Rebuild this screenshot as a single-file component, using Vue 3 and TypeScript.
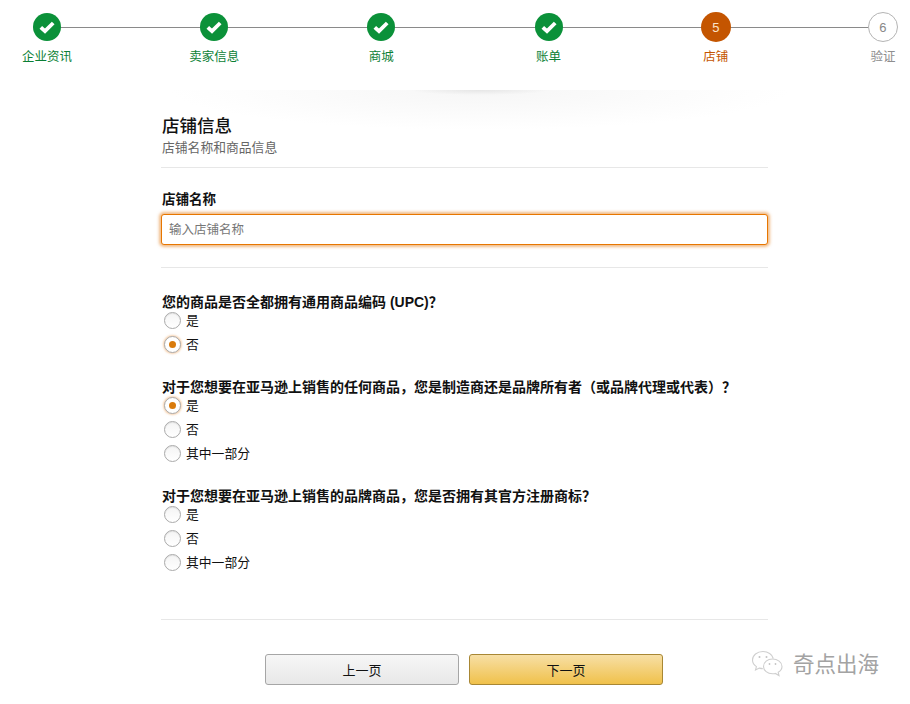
<script setup lang="ts">
interface Step { label: string; state: 'done' | 'current' | 'todo'; n: number }
const steps: Step[] = [
  { label: '企业资讯', state: 'done', n: 1 },
  { label: '卖家信息', state: 'done', n: 2 },
  { label: '商城', state: 'done', n: 3 },
  { label: '账单', state: 'done', n: 4 },
  { label: '店铺', state: 'current', n: 5 },
  { label: '验证', state: 'todo', n: 6 },
]
interface Question { title: string; options: string[]; checked: number; cls: string }
const questions: Question[] = [
  { title: '您的商品是否全都拥有通用商品编码 (UPC)？', options: ['是', '否'], checked: 1, cls: 'q1' },
  { title: '对于您想要在亚马逊上销售的任何商品，您是制造商还是品牌所有者（或品牌代理或代表）？', options: ['是', '否', '其中一部分'], checked: 0, cls: 'q2' },
  { title: '对于您想要在亚马逊上销售的品牌商品，您是否拥有其官方注册商标？', options: ['是', '否', '其中一部分'], checked: -1, cls: 'q3' },
]
</script>

<template>
  <div class="page">
    <div class="stepper">
      <div class="line"></div>
      <div v-for="s in steps" :key="s.n" class="step" :class="s.state">
        <div class="dot">
          <svg v-if="s.state === 'done'" width="18" height="18" viewBox="0 0 18 18">
            <path d="M2.800 9.300 L7 13.200 L15.200 5" fill="none" stroke="#fff" stroke-width="3.800" />
          </svg>
          <span v-else>{{ s.n }}</span>
        </div>
        <div class="step-label">{{ s.label }}</div>
      </div>
    </div>
    <div class="shadow"></div>
    <div class="content">
      <h1 class="title">店铺信息</h1>
      <div class="subtitle">店铺名称和商品信息</div>
      <hr class="rule rule-a" />
      <label class="field-label">店铺名称</label>
      <input class="field" type="text" placeholder="输入店铺名称" />
      <hr class="rule rule-b" />
      <div v-for="q in questions" :key="q.cls" class="question" :class="q.cls">
        <div class="q-title">{{ q.title }}</div>
        <div v-for="(o, i) in q.options" :key="o" class="option">
          <span class="radio" :class="{ on: i === q.checked }"></span>
          <span class="opt-text">{{ o }}</span>
        </div>
      </div>
      <hr class="rule rule-c" />
    </div>
    <div class="actions">
      <button class="btn prev" type="button">上一页</button>
      <button class="btn next" type="button">下一页</button>
    </div>
    <div class="mark">
      <svg width="36" height="28" viewBox="0 0 36 28" fill="none" stroke="#cfcfcf" stroke-width="1.100">
        <path d="M13 2.500C7 2.500 2.500 6.400 2.500 11c0 2.700 1.500 5 3.900 6.600L5.500 21l3.800-1.900c1.100.3 2.300.5 3.500.5" />
        <path d="M13 2.500c5 0 9.300 2.900 10.300 7" />
        <path d="M22.500 10C17.500 10 13.500 13.300 13.500 17.400s4 7.400 9 7.400c1 0 2-.1 2.900-.4L29 26.500l-.8-3.300c2.400-1.300 3.800-3.400 3.800-5.800C32 13.300 27.500 10 22.500 10z" />
        <circle cx="9.500" cy="8" r="1" fill="#c4c4c4" stroke="none" />
        <circle cx="16.500" cy="8" r="1" fill="#c4c4c4" stroke="none" />
        <circle cx="19.500" cy="15" r=".9" fill="#c4c4c4" stroke="none" />
        <circle cx="25.500" cy="15" r=".9" fill="#c4c4c4" stroke="none" />
      </svg>
      <span>奇点出海</span>
    </div>
  </div>
</template>

<style>
html, body { margin: 0; background: #fff; }
</style>

<style scoped>
.page {
  position: relative;
  width: 910px;
  height: 704px;
  overflow: hidden;
  background: #fff;
  font-family: "Noto Sans CJK SC", "Liberation Sans", sans-serif;
  color: #111;
}
.stepper {
  position: relative;
  display: flex;
  justify-content: space-between;
  padding: 13px 0 0 20px;
  height: 90px;
  box-sizing: border-box;
}
.line {
  position: absolute;
  left: 47px;
  right: 27px;
  top: 27px;
  height: 1px;
  background: #8a8a8a;
}
.step {
  position: relative;
  width: 54px;
  display: flex;
  flex-direction: column;
  align-items: center;
}
.dot {
  width: 28px;
  height: 28px;
  border-radius: 50%;
  display: flex;
  align-items: center;
  justify-content: center;
  box-sizing: border-box;
  font-family: "Liberation Sans", sans-serif;
  font-size: 13px;
}
.done .dot { background: #0b9139; }
.current .dot { background: #c45500; color: #fbe3c8; width: 30px; height: 30px; margin-top: -1px; }
.todo .dot { background: #fff; border: 1px solid #b4b4b4; color: #888; width: 30px; height: 30px; margin-top: -1px; }
.step-label {
  margin-top: 6px;
  font-size: 12.500px;
  line-height: 18px;
  white-space: nowrap;
}
.current .step-label { margin-top: 5px; color: #c45500; }
.done .step-label { color: #0b7f35; }
.todo .step-label { margin-top: 5px; color: #8e8e8e; }
.shadow {
  height: 40px;
  margin: 0 120px 0 170px;
  background:
    radial-gradient(ellipse 70px 5px at 50% 0, #e6e6e6, rgba(230,230,230,0)),
    radial-gradient(ellipse 50% 100% at 50% 0, #f6f6f6, rgba(255,255,255,0));
}
.content {
  width: 607px;
  margin-left: 161px;
  margin-top: -17px;
}
.title {
  margin: 0 0 0 1px;
  font-size: 17.500px;
  line-height: 23px;
  font-weight: 500;
  color: #111;
}
.subtitle {
  margin: 2px 0 0 1px;
  font-size: 12.800px;
  line-height: 18px;
  color: #666;
}
.rule {
  border: 0;
  height: 1px;
  background: #e7e7e7;
  margin: 0;
}
.rule-a { margin-top: 11px; }
.field-label {
  display: block;
  margin: 21px 0 0 1px;
  font-size: 13.500px;
  line-height: 18px;
  font-weight: 700;
}
.field {
  display: block;
  width: 100%;
  height: 31px;
  margin-top: 7px;
  padding: 0 7px 2px;
  box-sizing: border-box;
  border: 1px solid #e77600;
  border-radius: 3px;
  box-shadow: 0 0 3px 2px rgba(228, 121, 17, 0.5);
  font: inherit;
  font-size: 12.500px;
  outline: none;
}
.field::placeholder { color: #777; }
.rule-b { margin-top: 22px; }
.question { margin-left: 1px; }
.q1 { margin-top: 25px; }
.q2, .q3 { margin-top: 22px; }
.q-title {
  font-family: "Liberation Sans", "Noto Sans CJK SC", sans-serif;
  font-size: 14px;
  line-height: 18px;
  font-weight: 700;
  white-space: nowrap;
}
.option {
  display: flex;
  align-items: center;
  height: 24px;
  margin-top: -3px;
}
.option + .option { margin-top: 0; }
.radio {
  width: 15px;
  height: 15px;
  margin-left: 2px;
  border: 1px solid #aaa;
  border-radius: 50%;
  box-sizing: content-box;
  background: linear-gradient(#f4f4f4, #fff);
  box-shadow: inset 0 1px 1px rgba(0,0,0,.08);
  position: relative;
  flex: none;
}
.radio.on {
  background: #fff;
  box-shadow: 0 0 2px 1px rgba(228, 121, 17, .35);
}
.radio.on::after {
  content: "";
  position: absolute;
  left: 4px;
  top: 4px;
  width: 7px;
  height: 7px;
  border-radius: 50%;
  background: #d97b0c;
}
.opt-text {
  margin-left: 5px;
  padding-top: 1px;
  font-family: "Liberation Sans", "Noto Sans CJK SC", sans-serif;
  font-size: 12.800px;
  line-height: 18px;
}
.rule-c { margin-top: 45px; }
.actions {
  display: flex;
  gap: 10px;
  margin: 34px 0 0 265px;
}
.btn {
  width: 194px;
  height: 31px;
  padding: 0;
  border-radius: 3px;
  font: inherit;
  font-size: 13px;
  color: #111;
  box-sizing: border-box;
}
.prev {
  border: 1px solid #a6a6a6;
  background: linear-gradient(#f6f6f6, #e8e8e8);
}
.next {
  border: 1px solid #a88734;
  background: linear-gradient(#f7dfa5, #f0c14b);
}
.mark {
  position: absolute;
  left: 750px;
  top: 649px;
  display: flex;
  align-items: center;
  gap: 7px;
  color: #a3a3a3;
  font-size: 21.500px;
  line-height: 28px;
}
</style>
